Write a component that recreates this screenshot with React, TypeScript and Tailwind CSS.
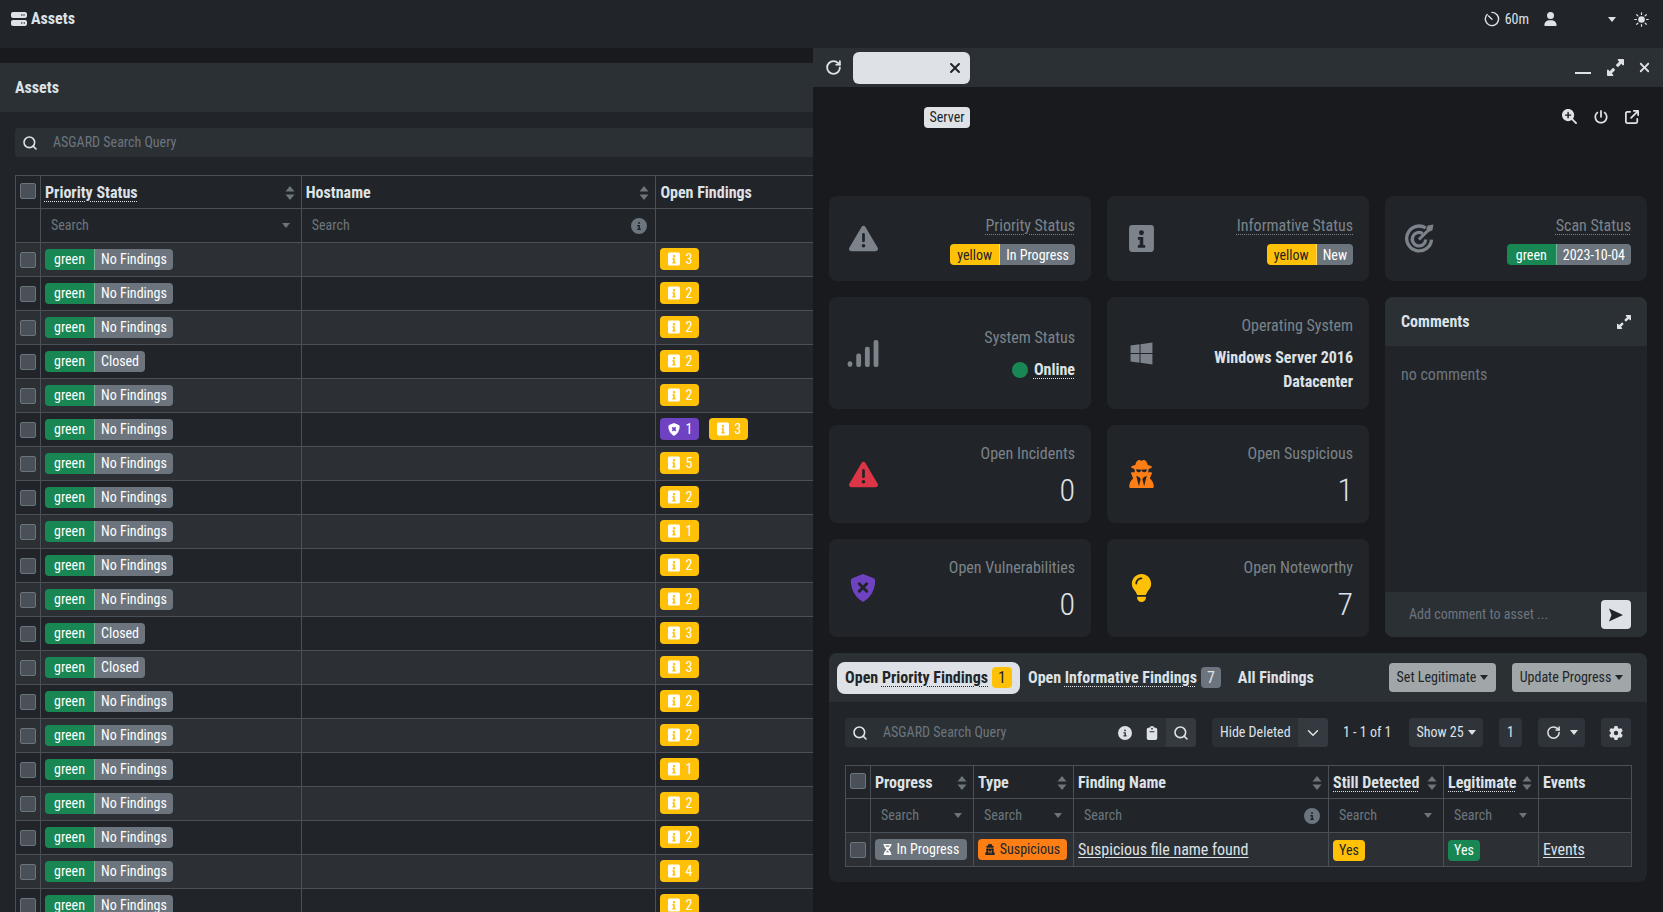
import type { ReactNode } from "react";
import { ChevronDown, RotateCw, Search } from "lucide-react";
import {
  FaGear,
  FaLightbulb,
  FaMagnifyingGlassPlus,
  FaPowerOff,
  FaTriangleExclamation,
  FaUser,
  FaUserSecret,
  FaWindows,
  FaXmark,
  FaClipboard,
  FaCircleInfo,
  FaHourglassHalf,
  FaUpRightAndDownLeftFromCenter,
  FaArrowUpRightFromSquare,
  FaServer,
} from "react-icons/fa6";

const rows: [string, number, number?][] = [
  ["No Findings", 3],
  ["No Findings", 2],
  ["No Findings", 2],
  ["Closed", 2],
  ["No Findings", 2],
  ["No Findings", 3, 1],
  ["No Findings", 5],
  ["No Findings", 2],
  ["No Findings", 1],
  ["No Findings", 2],
  ["No Findings", 2],
  ["Closed", 3],
  ["Closed", 3],
  ["No Findings", 2],
  ["No Findings", 2],
  ["No Findings", 1],
  ["No Findings", 2],
  ["No Findings", 2],
  ["No Findings", 4],
  ["No Findings", 2],
];

function Caret({ className = "" }: { className?: string }) {
  return (
    <svg viewBox="0 0 10 6" className={`w-[8px] h-[5px] fill-current shrink-0 ${className}`}>
      <path d="M0 0h10L5 6z" />
    </svg>
  );
}

function Sort() {
  return (
    <svg viewBox="0 0 10 14" className="w-[10px] h-[14px] fill-[#6c757d] shrink-0">
      <path d="M5 0l4.5 5.6H.5zM5 14L.5 8.4h9z" />
    </svg>
  );
}

function Check() {
  return <span className="block w-[16px] h-[16px] rounded-[2px] bg-[#495057] border border-[#6c757d]" />;
}

function InfoSquare({ className = "" }: { className?: string }) {
  return (
    <svg viewBox="0 0 24 28" className={`shrink-0 ${className}`}>
      <path
        fill="currentColor"
        fillRule="evenodd"
        d="M3 1h18a3 3 0 013 3v20a3 3 0 01-3 3H3a3 3 0 01-3-3V4a3 3 0 013-3zm9 5a2.4 2.4 0 100 4.8A2.4 2.4 0 0012 6zM8.5 12.5v2.6h1.8v5.2H8.5v2.6h7v-2.6h-1.8v-7.8z"
      />
    </svg>
  );
}

function StatusBadge({ left, right, dark }: { left: string; right: string; dark?: boolean }) {
  return (
    <span className="inline-flex h-[21px] items-center text-[14px] leading-none rounded-[4px] overflow-hidden">
      <span
        className={`h-full w-[50px] flex items-center justify-center border-r border-white/40 ${dark ? "bg-[#ffc107] text-[#212529]" : "bg-[#198754] text-white"}`}
      >
        {left}
      </span>
      <span className="h-full flex items-center px-[6px] bg-[#6c757d] text-white">{right}</span>
    </span>
  );
}

function CountBadge({ color, icon, n }: { color: string; icon: ReactNode; n: number }) {
  return (
    <span className={`inline-flex h-[22px] items-center gap-[5px] pl-[8px] pr-[7px] rounded-[4px] text-[14px] text-white ${color}`}>
      {icon}
      {n}
    </span>
  );
}

function SearchCell({ caret, info }: { caret?: boolean; info?: boolean }) {
  return (
    <div className={`flex items-center justify-between pl-[10px] text-[14px] text-[#6c757d] ${caret ? "pr-[11px]" : "pr-[8px]"}`}>
      <span>Search</span>
      {caret && <Caret className="text-[#6c757d]" />}
      {info && <FaCircleInfo className="w-[16px] h-[16px] text-[#6c757d]" />}
    </div>
  );
}

function Head({ label, dotted, sort = true }: { label: string; dotted?: boolean; sort?: boolean }) {
  return (
    <div className="flex items-center justify-between pl-[4px] pr-[6px] pt-[1px] font-bold text-[16px] text-[#dee2e6]">
      <span className={dotted ? "underline decoration-dotted underline-offset-[3px] decoration-1" : ""}>{label}</span>
      {sort && <Sort />}
    </div>
  );
}

function Stat({
  icon,
  label,
  dotted,
  children,
}: {
  icon: ReactNode;
  label: string;
  dotted?: boolean;
  children: ReactNode;
}) {
  return (
    <div className="bg-[#212529] rounded-[8px] flex items-center justify-between pl-[19px] pr-[16px]">
      <div className="w-[30px] flex justify-center">{icon}</div>
      <div className="flex flex-col items-end text-right">
        <span className={`text-[16px] leading-[24px] text-[#7c838a] ${dotted ? "underline decoration-dotted underline-offset-[3px] decoration-1" : ""}`}>
          {label}
        </span>
        {children}
      </div>
    </div>
  );
}

function Value({ n }: { n: number }) {
  return <span className="text-[32px] leading-[38px] mt-[5px] mb-[-2px] font-light text-[#dee2e6]">{n}</span>;
}

function Radar() {
  return (
    <svg viewBox="0 0 28 28" className="w-[29px] h-[29px] shrink-0 text-[#7c838a]" fill="none" stroke="currentColor">
      <path strokeWidth="3.2" d="M20 3.8A12 12 0 1025.6 15" />
      <path strokeWidth="3.2" d="M17 9.2A6.5 6.5 0 1020 15" />
      <path strokeWidth="2.8" d="M13.5 15L24.5 4" />
      <path fill="currentColor" stroke="none" d="M22 1.5l5.5-1-1 5.5-3 1.5-3-3z" />
    </svg>
  );
}

function Signal() {
  return (
    <svg viewBox="0 0 32 28" className="w-[32px] h-[27px] shrink-0 fill-[#7c838a]">
      <rect x="0" y="22" width="5" height="6" rx="2.5" />
      <rect x="9" y="14" width="5" height="14" rx="2" />
      <rect x="18" y="7" width="5" height="21" rx="2" />
      <rect x="27" y="0" width="5" height="28" rx="2" />
    </svg>
  );
}

function ShieldX() {
  return (
    <svg viewBox="0 0 26 30" className="w-[26px] h-[28px] shrink-0">
      <path fill="#6f42c1" d="M13 0l11 4.4c1 .4 2 1.4 2 2.6 0 9-4 18-13 23C4 25 0 16 0 7c0-1.2 1-2.2 2-2.6z" />
      <path stroke="#212529" strokeWidth="3.2" strokeLinecap="round" d="M9 10.5l8 8M17 10.5l-8 8" />
    </svg>
  );
}

function Stopwatch() {
  return (
    <svg viewBox="0 0 16 16" className="block w-[16px] h-[16px] shrink-0" fill="none" stroke="currentColor" strokeWidth="1.4">
      <path d="M8 1.4a6.6 6.6 0 11-4.8 2" strokeLinecap="round" />
      <path d="M4.6 5l3.4 3.2" strokeLinecap="round" />
    </svg>
  );
}

function Sun() {
  return (
    <svg viewBox="0 0 16 16" className="block w-[15px] h-[15px] shrink-0" stroke="currentColor" strokeWidth="1.3" strokeLinecap="round">
      <circle cx="8" cy="8" r="3.5" fill="currentColor" stroke="none" />
      <path d="M8 .8v1.8M8 13.4v1.8M.8 8h1.8M13.4 8h1.8M2.9 2.9l1.3 1.3M11.8 11.8l1.3 1.3M2.9 13.1l1.3-1.3M11.8 4.2l1.3-1.3" />
    </svg>
  );
}

function TableGrid({ children }: { children: ReactNode }) {
  return <table className="table-fixed border-collapse border border-[#495057]">{children}</table>;
}

const cell = "border border-[#495057] p-0 align-middle";

function AssetsPane() {
  return (
    <div className="flex-1 min-w-0 pt-[15px] overflow-hidden">
      <div className="h-full bg-[#212529] rounded-tl-[8px]">
        <div className="h-[49px] bg-[#2b3035] flex items-center px-[15px] font-bold text-[16px] text-[#dee2e6]">Assets</div>
        <div className="pl-[15px] pt-[16px]">
          <div className="h-[29px] bg-[#2b3035] rounded-l-[4px] flex items-center gap-[15px] pl-[7px] text-[14px] text-[#6c757d]">
            <Search className="w-[16px] h-[16px] text-[#dee2e6]" strokeWidth={2.4} />
            <span>ASGARD Search Query</span>
          </div>
          <div className="mt-[18px] w-[1000px]">
            <TableGrid>
              <colgroup>
                <col className="w-[25px]" />
                <col className="w-[261px]" />
                <col className="w-[355px]" />
                <col className="w-[359px]" />
              </colgroup>
              <thead>
                <tr className="h-[33px]">
                  <th className={cell}>
                    <div className="flex justify-center -mt-[2px]">
                      <Check />
                    </div>
                  </th>
                  <th className={cell}>
                    <Head label="Priority Status" dotted />
                  </th>
                  <th className={cell}>
                    <Head label="Hostname" />
                  </th>
                  <th className={cell}>
                    <div className="pl-[4px] pt-[1px] text-left font-bold text-[16px] text-[#dee2e6]">Open Findings</div>
                  </th>
                </tr>
                <tr className="h-[34px] font-normal">
                  <td className={cell} />
                  <td className={cell}>
                    <SearchCell caret />
                  </td>
                  <td className={cell}>
                    <SearchCell info />
                  </td>
                  <td className={cell} />
                </tr>
              </thead>
              <tbody>
                {rows.map(([status, info, shield], i) => (
                  <tr key={i} className={`h-[34px] ${i % 2 === 0 ? "bg-[#2c3034]" : "bg-[#212529]"}`}>
                    <td className={cell}>
                      <div className="flex justify-center">
                        <Check />
                      </div>
                    </td>
                    <td className={`${cell} pl-[4px] pb-[1px]`}>
                      <div className="flex">
                        <StatusBadge left="green" right={status} />
                      </div>
                    </td>
                    <td className={cell} />
                    <td className={`${cell} pl-[4px] pb-[1px]`}>
                      <div className="flex gap-[10px]">
                        {shield && (
                          <CountBadge
                            color="bg-[#6f42c1]"
                            n={shield}
                            icon={
                              <svg viewBox="0 0 26 30" className="w-[12px] h-[13px]">
                                <path fill="#fff" d="M13 0l11 4.4c1 .4 2 1.4 2 2.6 0 9-4 18-13 23C4 25 0 16 0 7c0-1.2 1-2.2 2-2.6z" />
                                <path stroke="#6f42c1" strokeWidth="4" d="M9 10l8 8M17 10l-8 8" />
                              </svg>
                            }
                          />
                        )}
                        <CountBadge color="bg-[#ffc107]" n={info} icon={<InfoSquare className="w-[12px] h-[14px] text-white" />} />
                      </div>
                    </td>
                  </tr>
                ))}
              </tbody>
            </TableGrid>
          </div>
        </div>
      </div>
    </div>
  );
}

function Findings() {
  return (
    <div className="mt-[16px] h-[229px] bg-[#212529] rounded-[8px] overflow-hidden">
      <div className="h-[49px] bg-[#2b3035] flex items-center px-[8px] text-[16px] font-bold">
        <div className="h-[32px] w-[183px] rounded-[8px] bg-[#dee2e6] text-[#212529] flex items-center justify-center gap-[4px]">
          <span>
            Open <span className="underline decoration-dotted underline-offset-[3px] decoration-1">Priority Findings</span>
          </span>
          <span className="bg-[#ffc107] rounded-[4px] px-[6px] h-[21px] flex items-center font-normal">1</span>
        </div>
        <div className="ml-[8px] flex items-center gap-[4px] text-[#dee2e6]">
          <span>
            Open <span className="underline decoration-dotted underline-offset-[3px] decoration-1">Informative Findings</span>
          </span>
          <span className="bg-[#6c757d] rounded-[4px] px-[6px] h-[21px] flex items-center font-normal">7</span>
        </div>
        <span className="ml-[17px] text-[#dee2e6]">All Findings</span>
        <button className="ml-auto w-[107px] h-[29px] rounded-[4px] bg-[#a1a6a8] text-[#212529] text-[14px] font-normal flex items-center justify-center gap-[4px]">
          Set Legitimate <Caret />
        </button>
        <button className="ml-[16px] mr-[8px] w-[119px] h-[29px] rounded-[4px] bg-[#a1a6a8] text-[#212529] text-[14px] font-normal flex items-center justify-center gap-[4px]">
          Update Progress <Caret />
        </button>
      </div>
      <div className="px-[16px] pt-[16px]">
        <div className="flex items-center h-[29px] text-[14px] text-[#dee2e6]">
          <div className="w-[351px] h-full bg-[#2b3035] rounded-[4px] flex items-center overflow-hidden">
            <Search className="ml-[7px] w-[16px] h-[16px]" strokeWidth={2.4} />
            <span className="ml-[15px] text-[#6c757d]">ASGARD Search Query</span>
            <FaCircleInfo className="ml-auto w-[14px] h-[14px]" />
            <FaClipboard className="ml-[14px] w-[12px] h-[14px]" />
            <div className="ml-[8px] w-[30px] h-full bg-[#343a40] flex items-center justify-center">
              <Search className="w-[16px] h-[16px]" strokeWidth={2.4} />
            </div>
          </div>
          <div className="ml-[16px] w-[116px] h-full bg-[#2b3035] rounded-[4px] flex items-center overflow-hidden">
            <span className="pl-[8px] flex-1">Hide Deleted</span>
            <div className="w-[30px] h-full bg-[#343a40] flex items-center justify-center">
              <ChevronDown className="w-[18px] h-[18px]" strokeWidth={2} />
            </div>
          </div>
          <span className="ml-[15px] w-[51px]">1 - 1 of 1</span>
          <div className="ml-[15px] w-[74px] h-full bg-[#2f343a] rounded-[4px] flex items-center justify-center gap-[4px]">
            Show 25 <Caret />
          </div>
          <div className="ml-[16px] w-[23px] h-full bg-[#2f343a] rounded-[4px] flex items-center justify-center">1</div>
          <div className="ml-[16px] w-[47px] h-full bg-[#2f343a] rounded-[4px] flex items-center justify-center gap-[9px]">
            <RotateCw className="w-[15px] h-[15px]" strokeWidth={2.4} />
            <Caret />
          </div>
          <div className="ml-[16px] w-[30px] h-full bg-[#2f343a] rounded-[4px] flex items-center justify-center">
            <FaGear className="w-[14px] h-[14px]" />
          </div>
        </div>
        <div className="mt-[18px]">
          <table className="table-fixed border-collapse border border-[#495057] w-[786px]">
            <colgroup>
              <col className="w-[25px]" />
              <col className="w-[103px]" />
              <col className="w-[100px]" />
              <col className="w-[255px]" />
              <col className="w-[115px]" />
              <col className="w-[95px]" />
              <col className="w-[93px]" />
            </colgroup>
            <thead>
              <tr className="h-[33px]">
                <th className={cell}>
                  <div className="flex justify-center -mt-[2px]">
                    <Check />
                  </div>
                </th>
                <th className={cell}>
                  <Head label="Progress" />
                </th>
                <th className={cell}>
                  <Head label="Type" />
                </th>
                <th className={cell}>
                  <Head label="Finding Name" />
                </th>
                <th className={cell}>
                  <Head label="Still Detected" dotted />
                </th>
                <th className={cell}>
                  <Head label="Legitimate" dotted />
                </th>
                <th className={cell}>
                  <Head label="Events" sort={false} />
                </th>
              </tr>
              <tr className="h-[34px]">
                <td className={cell} />
                <td className={cell}>
                  <SearchCell caret />
                </td>
                <td className={cell}>
                  <SearchCell caret />
                </td>
                <td className={cell}>
                  <SearchCell info />
                </td>
                <td className={cell}>
                  <SearchCell caret />
                </td>
                <td className={cell}>
                  <SearchCell caret />
                </td>
                <td className={cell} />
              </tr>
            </thead>
            <tbody>
              <tr className="h-[34px] bg-[#2c3034] text-[16px] text-[#dee2e6]">
                <td className={cell}>
                  <div className="flex justify-center">
                    <Check />
                  </div>
                </td>
                <td className={`${cell} px-[4px]`}>
                  <span className="h-[21px] w-[92px] rounded-[4px] bg-[#6c757d] text-white text-[14px] flex items-center justify-center gap-[5px]">
                    <FaHourglassHalf className="w-[9px] h-[11px]" />
                    In Progress
                  </span>
                </td>
                <td className={`${cell} px-[4px]`}>
                  <span className="h-[21px] w-[89px] rounded-[4px] bg-[#fd7e14] text-[#212529] text-[14px] flex items-center justify-center gap-[5px]">
                    <FaUserSecret className="w-[10px] h-[11px]" />
                    Suspicious
                  </span>
                </td>
                <td className={`${cell} pl-[4px]`}>
                  <span className="underline underline-offset-[2px]">Suspicious file name found</span>
                </td>
                <td className={`${cell} pl-[4px]`}>
                  <span className="inline-flex h-[21px] items-center px-[6px] rounded-[4px] bg-[#ffc107] text-[#212529] text-[14px]">Yes</span>
                </td>
                <td className={`${cell} pl-[4px]`}>
                  <span className="inline-flex h-[21px] items-center px-[6px] rounded-[4px] bg-[#198754] text-white text-[14px]">Yes</span>
                </td>
                <td className={`${cell} pl-[4px]`}>
                  <span className="underline underline-offset-[2px]">Events</span>
                </td>
              </tr>
            </tbody>
          </table>
        </div>
      </div>
    </div>
  );
}

function DetailPane() {
  return (
    <div className="w-[850px] shrink-0 bg-[#181a1e] flex flex-col">
      <div className="h-[39px] bg-[#2b3035] flex items-center pl-[12px] pr-[11px] text-[#dee2e6]">
        <RotateCw className="w-[17px] h-[17px]" strokeWidth={2.6} />
        <div className="ml-[11px] w-[117px] h-[32px] bg-[#dee2e6] rounded-[6px] flex items-center justify-end pr-[7px] text-[#212529]">
          <FaXmark className="w-[16px] h-[16px]" />
        </div>
        <span className="ml-auto block w-[16px] h-[2px] mt-[10px] bg-[#dee2e6]" />
        <FaUpRightAndDownLeftFromCenter className="ml-[16px] w-[17px] h-[17px]" />
        <FaXmark className="ml-[13px] w-[15px] h-[15px]" />
      </div>
      <div className="px-[16px] flex items-start pt-[20px] h-[109px]">
        <span className="ml-[95px] h-[21px] w-[46px] justify-center rounded-[4px] bg-[#dee2e6] text-[#212529] text-[14px] flex items-center">Server</span>
        <div className="ml-auto flex items-center gap-[17px] text-[#dee2e6] mr-[8px] mt-[2px]">
          <FaMagnifyingGlassPlus className="w-[15px] h-[15px]" />
          <FaPowerOff className="w-[14px] h-[14px]" />
          <FaArrowUpRightFromSquare className="w-[14px] h-[14px]" />
        </div>
      </div>
      <div className="px-[16px]">
        <div className="grid grid-cols-3 gap-[16px] grid-rows-[85px_112px_98px_98px]">
          <Stat icon={<FaTriangleExclamation className="w-[29px] h-[29px] shrink-0 text-[#7c838a]" />} label="Priority Status" dotted>
            <span className="mt-[6px] mb-[-2px] flex">
              <StatusBadge left="yellow" right="In Progress" dark />
            </span>
          </Stat>
          <Stat icon={<InfoSquare className="w-[25px] h-[29px] text-[#7c838a]" />} label="Informative Status" dotted>
            <span className="mt-[6px] mb-[-2px] flex">
              <StatusBadge left="yellow" right="New" dark />
            </span>
          </Stat>
          <Stat icon={<Radar />} label="Scan Status" dotted>
            <span className="mt-[6px] mb-[-2px] flex">
              <StatusBadge left="green" right="2023-10-04" />
            </span>
          </Stat>
          <Stat icon={<Signal />} label="System Status">
            <span className="mt-[8px] mb-[-2px] flex items-center gap-[6px] font-bold text-[#dee2e6]">
              <span className="w-[16px] h-[16px] rounded-full bg-[#198754]" />
              <span className="underline decoration-dotted underline-offset-[3px] decoration-1">Online</span>
            </span>
          </Stat>
          <Stat icon={<FaWindows className="w-[25px] h-[25px] shrink-0 text-[#7c838a]" />} label="Operating System">
            <span className="mt-[8px] mb-[-2px] text-[16px] leading-[24px] font-bold text-[#dee2e6]">
              Windows Server 2016
              <br />
              Datacenter
            </span>
          </Stat>
          <div className="row-span-3 bg-[#212529] rounded-[8px] overflow-hidden flex flex-col">
            <div className="h-[49px] bg-[#2b3035] flex items-center justify-between px-[16px] font-bold text-[16px] text-[#dee2e6]">
              Comments
              <FaUpRightAndDownLeftFromCenter className="w-[14px] h-[14px]" />
            </div>
            <div className="flex-1 px-[16px] pt-[17px] text-[16px] leading-[24px] text-[#6c757d]">no comments</div>
            <div className="h-[45px] bg-[#2b3035] flex items-center pl-[24px] pr-[16px] text-[14px] text-[#6c757d]">
              Add comment to asset ...
              <button className="ml-auto w-[30px] h-[29px] rounded-[4px] bg-[#dee2e6] flex items-center justify-center">
                <svg viewBox="0 0 16 16" className="w-[16px] h-[16px] fill-[#212529]">
                  <path d="M1 1.5L15 8 1 14.5 3.5 8z" />
                </svg>
              </button>
            </div>
          </div>
          <Stat icon={<FaTriangleExclamation className="w-[29px] h-[29px] shrink-0 text-[#dc3545]" />} label="Open Incidents">
            <Value n={0} />
          </Stat>
          <Stat icon={<FaUserSecret className="w-[25px] h-[28px] shrink-0 text-[#fd7e14]" />} label="Open Suspicious">
            <Value n={1} />
          </Stat>
          <Stat icon={<ShieldX />} label="Open Vulnerabilities">
            <Value n={0} />
          </Stat>
          <Stat icon={<FaLightbulb className="w-[21px] h-[28px] shrink-0 text-[#ffc107]" />} label="Open Noteworthy">
            <Value n={7} />
          </Stat>
        </div>
        <Findings />
      </div>
    </div>
  );
}

export default function App() {
  return (
    <div className="h-[912px] overflow-hidden flex flex-col bg-[#181a1e] text-[#dee2e6] text-[16px] [font-family:Roboto,sans-serif] [font-stretch:75%]">
      <div className="h-[48px] shrink-0 bg-[#212529] flex items-center pl-[11px] pr-[14px] pb-[10px]">
        <FaServer className="w-[16px] h-[16px]" />
        <span className="ml-[4px] font-bold">Assets</span>
        <span className="ml-auto">
          <Stopwatch />
        </span>
        <span className="ml-[5px] text-[14px]">60m</span>
        <FaUser className="ml-[15px] w-[13px] h-[14px]" />
        <Caret className="ml-[51px]" />
        <span className="ml-[18px]">
          <Sun />
        </span>
      </div>
      <div className="flex-1 min-h-0 flex">
        <AssetsPane />
        <DetailPane />
      </div>
    </div>
  );
}
